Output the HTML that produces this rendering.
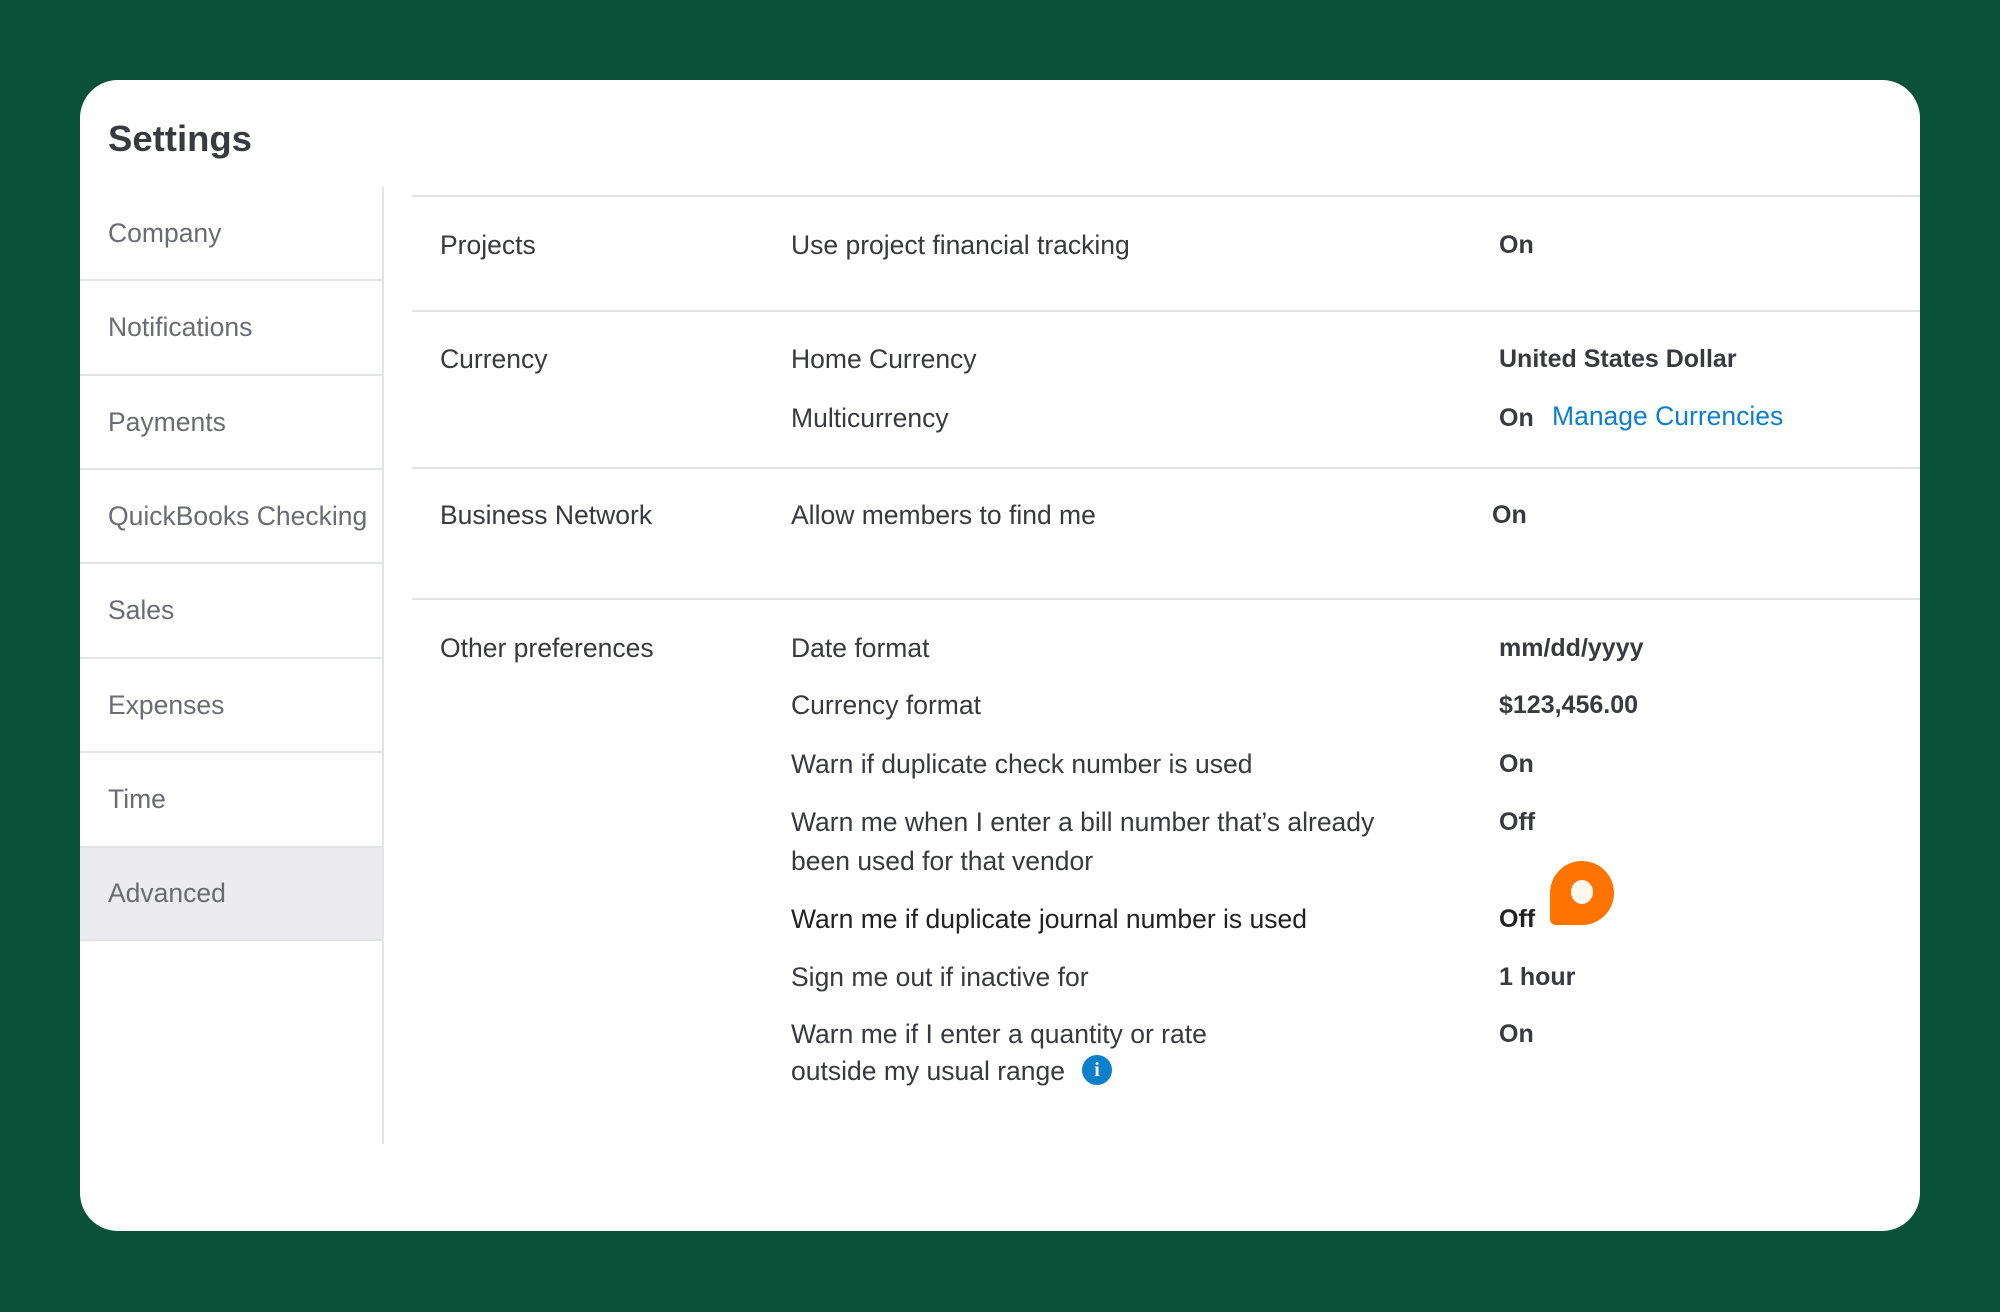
<!DOCTYPE html>
<html><head><meta charset="utf-8"><style>
*{margin:0;padding:0;box-sizing:border-box}
body{width:2000px;height:1312px;background:#0a513a;font-family:"Liberation Sans",sans-serif;position:relative;overflow:hidden}
.card{position:absolute;left:80px;top:80px;width:1840px;height:1151px;background:#fff;border-radius:38px;overflow:hidden}
.t{position:absolute;line-height:30px;height:30px;white-space:nowrap;font-size:26.5px;color:#393a3d}
.s{color:#6b6c72;font-size:26.5px}
.b{font-weight:bold;font-size:25px}
.h{position:absolute;height:2px;background:#e3e4e6}
</style></head><body>
<div class="card">
<div class="t" style="left:28px;top:37px;font-size:36.5px;font-weight:bold;height:44px;line-height:44px">Settings</div>
<div style="position:absolute;left:302px;top:107px;width:2px;height:957px;background:#e3e4e6"></div>
<div style="position:absolute;left:0;top:766px;width:302px;height:93px;background:#ececef"></div>
<div class="h" style="left:0;top:199px;width:302px"></div>
<div class="h" style="left:0;top:294px;width:302px"></div>
<div class="h" style="left:0;top:388px;width:302px"></div>
<div class="h" style="left:0;top:482px;width:302px"></div>
<div class="h" style="left:0;top:577px;width:302px"></div>
<div class="h" style="left:0;top:671px;width:302px"></div>
<div class="h" style="left:0;top:766px;width:302px"></div>
<div class="h" style="left:0;top:859px;width:302px"></div>
<div class="t s" style="left:28px;top:138px">Company</div>
<div class="t s" style="left:28px;top:232px">Notifications</div>
<div class="t s" style="left:28px;top:327px">Payments</div>
<div class="t s" style="left:28px;top:421px">QuickBooks Checking</div>
<div class="t s" style="left:28px;top:515px">Sales</div>
<div class="t s" style="left:28px;top:610px">Expenses</div>
<div class="t s" style="left:28px;top:704px">Time</div>
<div class="t s" style="left:28px;top:798px">Advanced</div>

<div class="h" style="left:332px;top:115px;width:1520px"></div>
<div class="h" style="left:332px;top:230px;width:1520px"></div>
<div class="h" style="left:332px;top:387px;width:1520px"></div>
<div class="h" style="left:332px;top:518px;width:1520px"></div>

<div class="t" style="left:360px;top:150px">Projects</div>
<div class="t" style="left:711px;top:150px">Use project financial tracking</div>
<div class="t b" style="left:1419px;top:150px">On</div>

<div class="t" style="left:360px;top:264px">Currency</div>
<div class="t" style="left:711px;top:264px">Home Currency</div>
<div class="t b" style="left:1419px;top:264px">United States Dollar</div>
<div class="t" style="left:711px;top:323px">Multicurrency</div>
<div class="t b" style="left:1419px;top:323px">On</div>
<div class="t" style="left:1472px;top:321px;color:#0d7fcc">Manage Currencies</div>

<div class="t" style="left:360px;top:420px">Business Network</div>
<div class="t" style="left:711px;top:420px">Allow members to find me</div>
<div class="t b" style="left:1412px;top:420px">On</div>

<div class="t" style="left:360px;top:553px">Other preferences</div>
<div class="t" style="left:711px;top:553px">Date format</div>
<div class="t b" style="left:1419px;top:553px">mm/dd/yyyy</div>
<div class="t" style="left:711px;top:610px">Currency format</div>
<div class="t b" style="left:1419px;top:610px">$123,456.00</div>
<div class="t" style="left:711px;top:669px">Warn if duplicate check number is used</div>
<div class="t b" style="left:1419px;top:669px">On</div>
<div class="t" style="left:711px;top:727px">Warn me when I enter a bill number that’s already</div>
<div class="t" style="left:711px;top:766px">been used for that vendor</div>
<div class="t b" style="left:1419px;top:727px">Off</div>
<div class="t" style="left:711px;top:824px;color:#222">Warn me if duplicate journal number is used</div>
<div class="t b" style="left:1419px;top:824px;color:#222">Off</div>
<div class="t" style="left:711px;top:882px">Sign me out if inactive for</div>
<div class="t b" style="left:1419px;top:882px">1 hour</div>
<div class="t" style="left:711px;top:939px">Warn me if I enter a quantity or rate</div>
<div class="t b" style="left:1419px;top:939px">On</div>
<div class="t" style="left:711px;top:976px">outside my usual range</div>
<div style="position:absolute;left:1002px;top:975px;width:30px;height:30px;border-radius:50%;background:#0d7fcc;color:#fff;font:bold 20px/30px 'Liberation Serif',serif;text-align:center">i</div>
<div style="position:absolute;left:1470px;top:781px;width:64px;height:64px;background:#ff7300;border-radius:32px 32px 32px 6px"></div>
<div style="position:absolute;left:1491px;top:800px;width:22px;height:24px;border-radius:50%;background:#fdf8ee"></div>
</div>
</body></html>
